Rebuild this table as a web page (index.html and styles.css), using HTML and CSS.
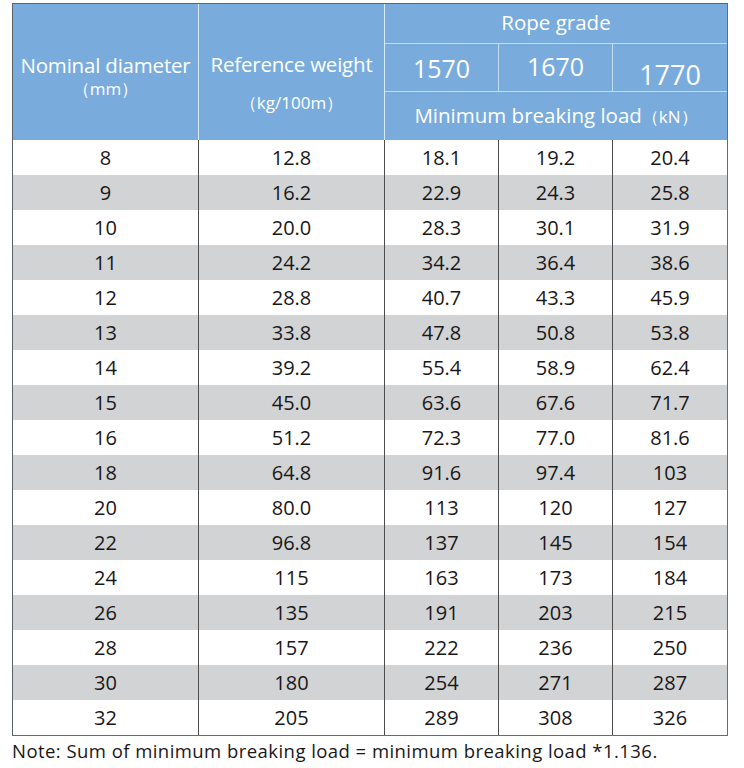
FILE: index.html
```html
<!DOCTYPE html>
<html lang="en">
<head>
<meta charset="utf-8">
<title>Rope grade table</title>
<link rel="stylesheet" href="styles.css">
</head>
<body>
<table class="spec">
  <colgroup>
    <col class="c-dia"><col class="c-wt"><col class="c-g"><col class="c-g"><col class="c-g">
  </colgroup>
  <thead>
    <tr class="h-row1">
      <th rowspan="3" class="h-dia"><div class="h-main">Nominal diameter</div><div class="h-unit">（mm）</div></th>
      <th rowspan="3" class="h-wt"><div class="h-main">Reference weight</div><div class="h-unit h-unit-gap">（kg/100m）</div></th>
      <th colspan="3" class="h-grade">Rope grade</th>
    </tr>
    <tr class="h-row2">
      <th class="g g1">1570</th>
      <th class="g g2">1670</th>
      <th class="g g3">1770</th>
    </tr>
    <tr class="h-row3">
      <th colspan="3" class="h-load">Minimum breaking load<span class="h-kn">（kN）</span></th>
    </tr>
  </thead>
  <tbody>
    <tr><td>8</td><td>12.8</td><td>18.1</td><td>19.2</td><td>20.4</td></tr>
    <tr><td>9</td><td>16.2</td><td>22.9</td><td>24.3</td><td>25.8</td></tr>
    <tr><td>10</td><td>20.0</td><td>28.3</td><td>30.1</td><td>31.9</td></tr>
    <tr><td>11</td><td>24.2</td><td>34.2</td><td>36.4</td><td>38.6</td></tr>
    <tr><td>12</td><td>28.8</td><td>40.7</td><td>43.3</td><td>45.9</td></tr>
    <tr><td>13</td><td>33.8</td><td>47.8</td><td>50.8</td><td>53.8</td></tr>
    <tr><td>14</td><td>39.2</td><td>55.4</td><td>58.9</td><td>62.4</td></tr>
    <tr><td>15</td><td>45.0</td><td>63.6</td><td>67.6</td><td>71.7</td></tr>
    <tr><td>16</td><td>51.2</td><td>72.3</td><td>77.0</td><td>81.6</td></tr>
    <tr><td>18</td><td>64.8</td><td>91.6</td><td>97.4</td><td>103</td></tr>
    <tr><td>20</td><td>80.0</td><td>113</td><td>120</td><td>127</td></tr>
    <tr><td>22</td><td>96.8</td><td>137</td><td>145</td><td>154</td></tr>
    <tr><td>24</td><td>115</td><td>163</td><td>173</td><td>184</td></tr>
    <tr><td>26</td><td>135</td><td>191</td><td>203</td><td>215</td></tr>
    <tr><td>28</td><td>157</td><td>222</td><td>236</td><td>250</td></tr>
    <tr><td>30</td><td>180</td><td>254</td><td>271</td><td>287</td></tr>
    <tr><td>32</td><td>205</td><td>289</td><td>308</td><td>326</td></tr>
  </tbody>
</table>
<p class="note">Note: Sum of minimum breaking load = minimum breaking load *1.136.</p>
</body>
</html>
```
FILE: styles.css
```css
html, body {
  margin: 0;
  padding: 0;
  background: #ffffff;
}
body {
  font-family: "Open Sans", "Liberation Sans", sans-serif;
  color: #1a1718;
  padding: 3px 0 0 12px;
}
.spec {
  border-collapse: separate;
  border-spacing: 0;
  table-layout: fixed;
  width: 714px;
  border-top: 1px solid #5b6670;
  border-left: 1px solid #5b6168;
  border-right: 1px solid #6b6b6b;
  border-bottom: 1px solid #6b6b6b;
}
.c-dia { width: 186px; }
.c-wt { width: 186px; }
.c-g { width: 114px; }
.spec th,
.spec td {
  box-sizing: border-box;
  padding: 0;
  text-align: center;
}
.spec th {
  background: #79acdc;
  color: #ffffff;
  font-weight: normal;
  overflow: hidden;
}
.h-dia, .h-wt {
  vertical-align: top;
  border-right: 1px solid #d6ebf8;
}
.spec .h-dia { padding-top: 49px; }
.spec .h-wt { padding-top: 48px; }
.h-main {
  font-size: 20.5px;
  line-height: 24px;
  white-space: nowrap;
  letter-spacing: -0.2px;
}
.h-unit {
  font-size: 17px;
  line-height: 20px;
  margin-top: 2px;
}
.h-unit-gap { margin-top: 17px; }
.spec .h-grade {
  height: 40px;
  font-size: 20.5px;
  line-height: 24px;
  vertical-align: middle;
  padding-bottom: 3px;
  border-bottom: 1px solid #c4dcf2;
}
.spec .g {
  height: 48px;
  font-size: 25px;
  line-height: 28px;
  vertical-align: top;
  border-bottom: 1px solid #c4dcf2;
}
.g1, .g2 { border-right: 1px solid #c4dcf2; }
.spec .g1 { padding-top: 10px; }
.spec .g2 { padding-top: 8px; }
.spec .g3 { padding-top: 17px; font-size: 27px; }
.spec .h-load {
  height: 48px;
  font-size: 20.5px;
  line-height: 24px;
  vertical-align: middle;
  padding-bottom: 1px;
}
.h-kn { font-size: 17px; }
.spec td {
  height: 35px;
  vertical-align: middle;
  font-size: 20px;
  line-height: 24px;
  border-right: 1px solid #4d4d4d;
}
.spec td:last-child { border-right: none; }
.spec tbody tr:nth-child(even) td { background: #d1d3d4; }
.note {
  margin: 3px 0 0 0;
  font-size: 18.5px;
  letter-spacing: 0.45px;
  line-height: 24px;
  white-space: nowrap;
}
```
